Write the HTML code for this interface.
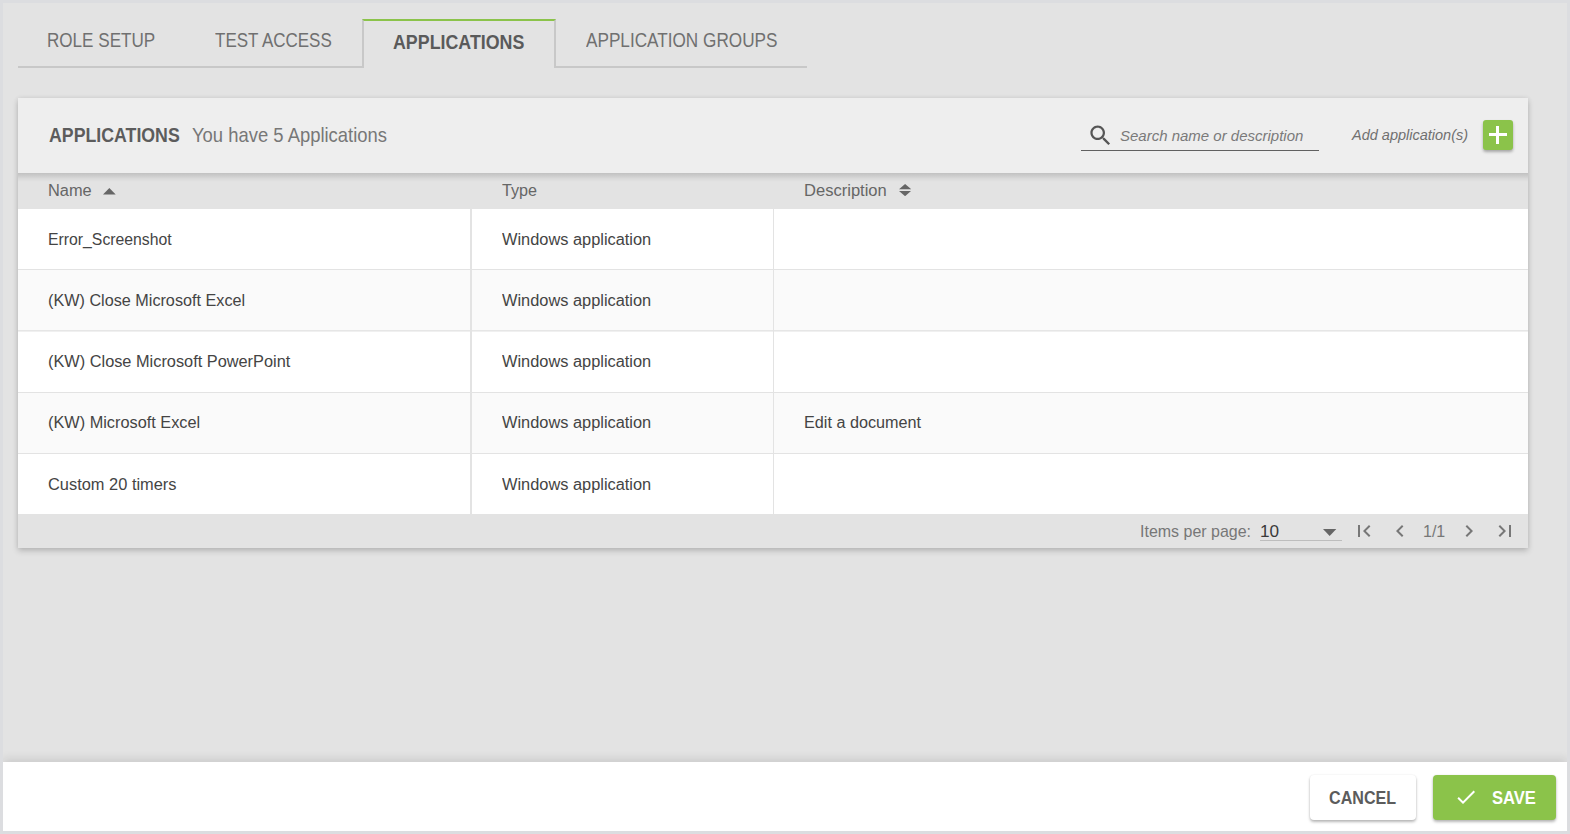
<!DOCTYPE html>
<html>
<head>
<meta charset="utf-8">
<style>
*{box-sizing:border-box;margin:0;padding:0}
html,body{width:1570px;height:834px;overflow:hidden}
body{background:#dcdde0;font-family:"Liberation Sans",sans-serif;position:relative}
.a{position:absolute}
.t{position:absolute;white-space:nowrap;line-height:1;transform-origin:0 0;z-index:10}
svg{position:absolute;z-index:5}
</style>
</head>
<body>
<div class="a" style="left:3px;top:3px;width:1564px;height:759px;background:#e3e3e3"></div>

<!-- tabs -->
<div class="a" style="left:18px;top:66px;width:789px;height:2px;background:#c8c8c8"></div>
<div class="a" style="left:362px;top:19px;width:194px;height:49px;background:#e3e3e3;border-left:2px solid #c8c8c8;border-right:2px solid #c8c8c8;border-top:2px solid #8bc34a"></div>

<!-- card -->
<div class="a" style="left:18px;top:98px;width:1510px;height:450px;background:#e3e3e3;box-shadow:0 3px 6px rgba(0,0,0,.18),0 0 5px rgba(0,0,0,.07)"></div>
<div class="a" style="left:18px;top:98px;width:1510px;height:75px;background:#eeeeee;z-index:2"></div>
<div class="a" style="left:18px;top:173px;width:1510px;height:9px;background:linear-gradient(rgba(0,0,0,.15),rgba(0,0,0,.1) 30%,rgba(0,0,0,.04) 65%,rgba(0,0,0,0));z-index:2"></div>
<div class="a" style="left:18px;top:209px;width:1510px;height:60px;background:#fff"></div>
<div class="a" style="left:18px;top:269px;width:1510px;height:1px;background:#e3e3e3"></div>
<div class="a" style="left:18px;top:270px;width:1510px;height:61px;background:#fafafa"></div>
<div class="a" style="left:18px;top:330px;width:1510px;height:1px;background:#e6e6e6"></div>
<div class="a" style="left:18px;top:331px;width:1510px;height:1px;background:#f0f0f0"></div>
<div class="a" style="left:18px;top:332px;width:1510px;height:60px;background:#fff"></div>
<div class="a" style="left:18px;top:392px;width:1510px;height:1px;background:#e3e3e3"></div>
<div class="a" style="left:18px;top:393px;width:1510px;height:60px;background:#fafafa"></div>
<div class="a" style="left:18px;top:453px;width:1510px;height:1px;background:#e3e3e3"></div>
<div class="a" style="left:18px;top:454px;width:1510px;height:60px;background:#fff"></div>
<div class="a" style="left:470px;top:209px;width:2px;height:305px;background:#e3e3e3"></div>
<div class="a" style="left:773px;top:209px;width:1px;height:305px;background:#e3e3e3"></div>

<!-- header icons -->
<svg style="left:1086.5px;top:121.5px" width="27" height="27" viewBox="0 0 24 24"><path fill="#555" d="M15.5 14h-.79l-.28-.27C15.41 12.59 16 11.11 16 9.5 16 5.91 13.09 3 9.5 3S3 5.91 3 9.5 5.91 16 9.5 16c1.61 0 3.09-.59 4.23-1.57l.27.28v.79l5 4.99L20.49 19l-4.99-5zm-6 0C7.01 14 5 11.990 5 9.5S7.01 5 9.5 5 14 7.01 14 9.5 11.99 14 9.5 14z"/></svg>
<div class="a" style="left:1081px;top:150px;width:237.5px;height:1.2px;background:#606060;z-index:3"></div>
<div class="a" style="left:1483px;top:120px;width:30px;height:30px;background:#8bc34a;border-radius:3px;box-shadow:0 2px 3px rgba(0,0,0,.3);z-index:3">
  <div class="a" style="left:5.5px;top:13px;width:18.5px;height:3.2px;background:#fff"></div>
  <div class="a" style="left:13px;top:5.5px;width:3.2px;height:18.5px;background:#fff"></div>
</div>

<!-- sort icons -->
<svg style="left:102.6px;top:187.9px" width="13" height="7" viewBox="0 0 13 7"><path fill="#666" d="M0 6.6L6.35 0L12.7 6.6z"/></svg>
<svg style="left:899px;top:184px" width="12.2" height="12.4" viewBox="0 0 12.2 12.4"><path fill="#666" d="M0 5.2L6.1 0L12.2 5.2zM0 6.9L6.1 12.2L12.2 6.9z"/></svg>

<!-- pagination -->
<svg style="left:1323.4px;top:529px" width="13.3" height="7" viewBox="0 0 13.3 7"><path fill="#666" d="M0 0L6.65 7L13.3 0z"/></svg>
<div class="a" style="left:1260px;top:540px;width:82px;height:1px;background:#bdbdbd"></div>
<svg style="left:1352px;top:519.3px" width="24" height="24" viewBox="0 0 24 24"><path fill="#777" d="M18.41 16.59L13.82 12l4.59-4.59L17 6l-6 6 6 6zM6 6h2v12H6z"/></svg>
<svg style="left:1388.3px;top:519.3px" width="24" height="24" viewBox="0 0 24 24"><path fill="#777" d="M15.41 7.41L14 6l-6 6 6 6 1.41-1.41L10.83 12z"/></svg>
<svg style="left:1457.3px;top:519.3px" width="24" height="24" viewBox="0 0 24 24"><path fill="#777" d="M10 6L8.59 7.41 13.17 12l-4.58 4.59L10 18l6-6z"/></svg>
<svg style="left:1492.9px;top:519.3px" width="24" height="24" viewBox="0 0 24 24"><path fill="#777" d="M5.59 7.41L10.18 12l-4.59 4.59L7 18l6-6-6-6zM16 6h2v12h-2z"/></svg>

<!-- footer -->
<div class="a" style="left:3px;top:762px;width:1564px;height:69px;background:#fff;box-shadow:0 -3px 9px rgba(0,0,0,.11)"></div>
<div class="a" style="left:1310px;top:775px;width:106px;height:45px;background:#fff;border-radius:4px;box-shadow:0 2px 3px rgba(0,0,0,.28),0 0 2px rgba(0,0,0,.08)"></div>
<div class="a" style="left:1433px;top:775px;width:123px;height:45px;background:#8bc34a;border-radius:4px;box-shadow:0 2px 3px rgba(0,0,0,.28),0 0 2px rgba(0,0,0,.08)"></div>
<svg style="left:1453.7px;top:785.3px" width="24" height="24" viewBox="0 0 24 24"><path fill="#fff" d="M9 16.17L4.83 12l-1.42 1.41L9 19 21 7l-1.41-1.41z"/></svg>

<div class="t" style="left:47.05px;top:30.90px;font-size:19.55px;font-weight:400;font-style:normal;color:#707070;transform:scaleX(0.8744)">ROLE SETUP</div>
<div class="t" style="left:215.20px;top:30.90px;font-size:19.55px;font-weight:400;font-style:normal;color:#707070;transform:scaleX(0.8701)">TEST ACCESS</div>
<div class="t" style="left:393.18px;top:32.80px;font-size:19.41px;font-weight:700;font-style:normal;color:#5a5a5a;transform:scaleX(0.9184)">APPLICATIONS</div>
<div class="t" style="left:586.00px;top:30.90px;font-size:19.69px;font-weight:400;font-style:normal;color:#707070;transform:scaleX(0.8721)">APPLICATION GROUPS</div>
<div class="t" style="left:49.39px;top:125.80px;font-size:19.41px;font-weight:700;font-style:normal;color:#5c5c5c;transform:scaleX(0.9142)">APPLICATIONS</div>
<div class="t" style="left:191.55px;top:125.80px;font-size:19.41px;font-weight:400;font-style:normal;color:#777;transform:scaleX(0.9495)">You have 5 Applications</div>
<div class="t" style="left:1119.51px;top:127.80px;font-size:15.08px;font-weight:400;font-style:italic;color:#7a7a7a;transform:scaleX(0.9945)">Search name or description</div>
<div class="t" style="left:1351.76px;top:126.90px;font-size:15.08px;font-weight:400;font-style:italic;color:#707070;transform:scaleX(0.9620)">Add application(s)</div>
<div class="t" style="left:47.61px;top:182.80px;font-size:16.62px;font-weight:400;font-style:normal;color:#666;transform:scaleX(0.9860)">Name</div>
<div class="t" style="left:501.85px;top:182.80px;font-size:16.62px;font-weight:400;font-style:normal;color:#666;transform:scaleX(0.9729)">Type</div>
<div class="t" style="left:804.10px;top:182.80px;font-size:16.62px;font-weight:400;font-style:normal;color:#666;transform:scaleX(0.9963)">Description</div>
<div class="t" style="left:47.65px;top:231.90px;font-size:16.62px;font-weight:400;font-style:normal;color:#444;transform:scaleX(0.9504)">Error_Screenshot</div>
<div class="t" style="left:502.00px;top:231.90px;font-size:16.62px;font-weight:400;font-style:normal;color:#444;transform:scaleX(0.9854)">Windows application</div>
<div class="t" style="left:47.88px;top:292.80px;font-size:16.62px;font-weight:400;font-style:normal;color:#444;transform:scaleX(0.9752)">(KW) Close Microsoft Excel</div>
<div class="t" style="left:502.00px;top:292.80px;font-size:16.62px;font-weight:400;font-style:normal;color:#444;transform:scaleX(0.9854)">Windows application</div>
<div class="t" style="left:47.88px;top:353.70px;font-size:16.62px;font-weight:400;font-style:normal;color:#444;transform:scaleX(0.9830)">(KW) Close Microsoft PowerPoint</div>
<div class="t" style="left:502.00px;top:353.70px;font-size:16.62px;font-weight:400;font-style:normal;color:#444;transform:scaleX(0.9854)">Windows application</div>
<div class="t" style="left:47.88px;top:415.00px;font-size:16.62px;font-weight:400;font-style:normal;color:#444;transform:scaleX(0.9813)">(KW) Microsoft Excel</div>
<div class="t" style="left:502.00px;top:415.00px;font-size:16.62px;font-weight:400;font-style:normal;color:#444;transform:scaleX(0.9854)">Windows application</div>
<div class="t" style="left:47.61px;top:476.80px;font-size:16.62px;font-weight:400;font-style:normal;color:#444;transform:scaleX(0.9876)">Custom 20 timers</div>
<div class="t" style="left:502.00px;top:476.80px;font-size:16.62px;font-weight:400;font-style:normal;color:#444;transform:scaleX(0.9854)">Windows application</div>
<div class="t" style="left:804.32px;top:415.00px;font-size:16.62px;font-weight:400;font-style:normal;color:#444;transform:scaleX(0.9756)">Edit a document</div>
<div class="t" style="left:1139.52px;top:522.80px;font-size:16.34px;font-weight:400;font-style:normal;color:#777;transform:scaleX(0.9784)">Items per page:</div>
<div class="t" style="left:1259.88px;top:524.00px;font-size:16.9px;font-weight:400;font-style:normal;color:#3a3a3a;transform:scaleX(1.0176)">10</div>
<div class="t" style="left:1422.52px;top:523.00px;font-size:16.34px;font-weight:400;font-style:normal;color:#777;transform:scaleX(0.9810)">1/1</div>
<div class="t" style="left:1329.30px;top:789.90px;font-size:17.88px;font-weight:700;font-style:normal;color:#5c5c5c;transform:scaleX(0.9014)">CANCEL</div>
<div class="t" style="left:1492.25px;top:789.80px;font-size:17.46px;font-weight:700;font-style:normal;color:#fff;transform:scaleX(0.9511)">SAVE</div>
<div class="a" style="left:0;top:0;width:1570px;height:3px;background:#dcdde0;z-index:50"></div>
<div class="a" style="left:0;top:831px;width:1570px;height:3px;background:#dcdde0;z-index:50"></div>
<div class="a" style="left:0;top:0;width:3px;height:834px;background:#dcdde0;z-index:50"></div>
<div class="a" style="left:1567px;top:0;width:3px;height:834px;background:#dcdde0;z-index:50"></div>
</body>
</html>
